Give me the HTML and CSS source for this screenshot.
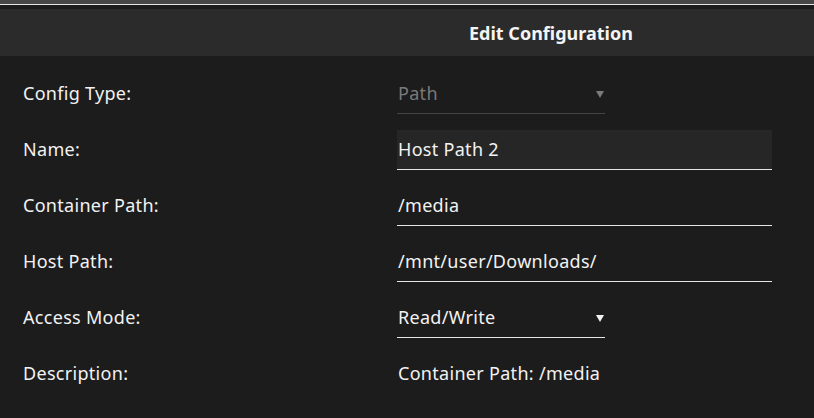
FILE: index.html
```html
<!doctype html>
<html>
    <head>
        <title>Edit Configuration</title>
        <link rel="stylesheet" href="styles.css">
    </head>
    <body>
        <div class="topstrip"></div>
        <div class="header">
            <span class="title">Edit Configuration</span>
        </div>
        <div class="form">
            <div class="row">
                <label>Config Type:</label>
                <div class="field select disabled">Path<span class="arrow"></span></div>
            </div>
            <div class="row">
                <label>Name:</label>
                <div class="field wide focused">Host Path 2</div>
            </div>
            <div class="row">
                <label>Container Path:</label>
                <div class="field wide">/media</div>
            </div>
            <div class="row">
                <label>Host Path:</label>
                <div class="field wide">/mnt/user/Downloads/</div>
            </div>
            <div class="row">
                <label>Access Mode:</label>
                <div class="field select">Read/Write<span class="arrow"></span></div>
            </div>
            <div class="row">
                <label>Description:</label>
                <div class="desc">Container Path: /media</div>
            </div>
        </div>
    </body>
</html>
```

FILE: styles.css
```css
body {
    margin: 0;
    background-color: #1c1c1c;
    color: #f2f2f2;
    font-family: "Noto Sans", "DejaVu Sans", sans-serif;
    font-size: 18px;
}
.topstrip {
    height: 4px;
    background-color: #474747;
    border-bottom: 1px solid #e6e6e6;
    margin-bottom: 4px;
}
.header {
    height: 47px;
    background-color: #2b2b2b;
    display: flex;
    align-items: center;
    padding-left: 469px;
}
.title {
    font-weight: bold;
    font-size: 18px;
    color: #f4f4f4;
}
.form {
    padding: 10px 0 0 23px;
    letter-spacing: 0.3px;
}
.row {
    display: grid;
    grid-template-columns: 374px 1fr;
    align-items: center;
    height: 56px;
    line-height: 24px;
}
.row label {
    padding-bottom: 3px;
}
.field {
    box-sizing: border-box;
    height: 40px;
    display: flex;
    align-items: center;
    padding: 0 0 2px 1px;
    border-bottom: 1px solid #e6e6e6;
}
.wide {
    width: 375px;
}
.focused {
    background-color: #262626;
}
.select {
    width: 208px;
    justify-content: space-between;
    padding-right: 1px;
}
.disabled {
    color: #7a7a7a;
    border-bottom-color: #444;
}
.arrow {
    width: 0;
    height: 0;
    border-left: 4px solid transparent;
    border-right: 4px solid transparent;
    border-top: 7px solid #f2f2f2;
    margin-top: 3px;
}
.disabled .arrow {
    border-top-color: #7a7a7a;
}
.desc {
    padding: 0 0 3px 1px;
}
```
